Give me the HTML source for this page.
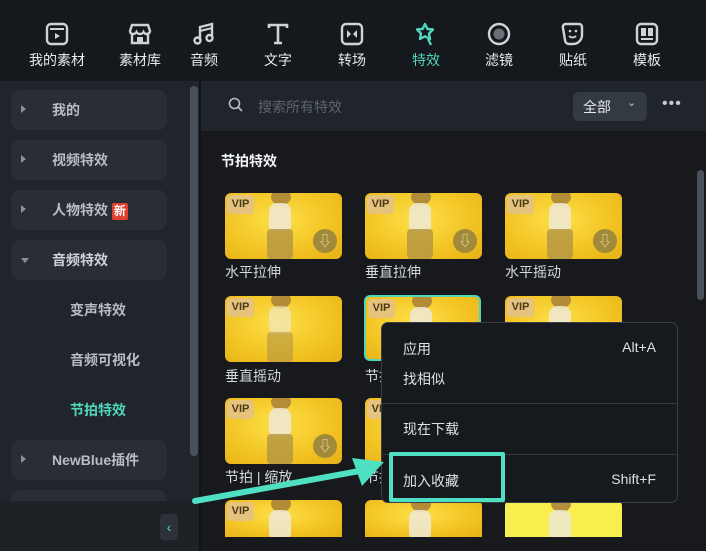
<!DOCTYPE html>
<html><head><meta charset="utf-8"><style>
*{margin:0;padding:0;box-sizing:border-box}
html,body{width:706px;height:551px;overflow:hidden}
body{background:#16191d;font-family:"Liberation Sans","Noto Sans CJK SC",sans-serif;position:relative;color:#d6d9dd}
.top{position:absolute;left:0;top:0;width:706px;height:81px;background:#15181c}
.tb{position:absolute;top:21px;width:74px;text-align:center;font-size:14px;color:#e8eaec}
.tb svg{display:block;margin:0 auto 3px}
.side{position:absolute;left:0;top:81px;width:200px;height:470px;background:#20252b}
.it{position:absolute;left:11px;width:156px;height:40px;background:#292e35;border-radius:9px;font-size:14px;font-weight:bold;color:#b8bdc4}
.it span.t{position:absolute;left:41px;top:10px}
.it .ar{position:absolute;left:10px;top:15px;width:0;height:0;border-left:5px solid #8a9098;border-top:4px solid transparent;border-bottom:4px solid transparent}
.sub{position:absolute;left:70px;font-size:14px;font-weight:bold;color:#b8bdc4}
.main{position:absolute;left:201px;top:81px;width:505px;height:470px;background:#17191c}
.search{position:absolute;left:201px;top:81px;width:505px;height:50px;background:#20252b}
.th{position:absolute;width:117px;height:66px;border-radius:6px;overflow:hidden;background:radial-gradient(ellipse at 45% 40%,#fde14a,#f2c322 60%,#e6b118)}
.th .fig{position:absolute;left:44px;top:10px;width:22px;height:28px;background:#efe9d6;border-radius:8px 8px 4px 4px;opacity:.85}
.th .leg{position:absolute;left:42px;top:36px;width:26px;height:30px;background:#b39445;border-radius:4px;opacity:.8}
.th .hd{position:absolute;left:46px;top:-4px;width:20px;height:16px;background:#a7803a;border-radius:50%;opacity:.85}
.vip{position:absolute;left:2px;top:2px;width:27px;height:19px;background:#e5c37c;border-radius:4px;font-size:11px;font-weight:bold;color:#4a3a18;text-align:center;line-height:19px}
.dl{position:absolute;right:5px;bottom:6px;width:24px;height:24px;border-radius:50%;background:#a18a3a;color:#efe2b0;text-align:center;font-size:14px;line-height:24px}
.lb{position:absolute;font-size:14px;color:#d6d9dd}
.menu{position:absolute;left:381px;top:322px;width:297px;height:181px;background:#16191d;border:1px solid #3a3f46;border-radius:7px}
.mi{position:absolute;left:21px;font-size:14px;color:#dde0e4}
.sc{position:absolute;right:21px;font-size:14px;color:#dde0e4}
.sep{position:absolute;left:0;width:295px;height:1px;background:#33383f}
</style></head><body>
<div class="top">
 <div class="tb" style="left:20px"><svg width="26" height="26" viewBox="0 0 26 26"><rect x="3" y="3" width="20" height="20" rx="4" fill="none" stroke="#cfd2d6" stroke-width="2.4"/><line x1="6" y1="8" x2="20" y2="8" stroke="#cfd2d6" stroke-width="2"/><path d="M11 12l5 3-5 3z" fill="#cfd2d6"/></svg>我的素材</div>
 <div class="tb" style="left:103px"><svg width="26" height="26" viewBox="0 0 26 26"><path d="M5 4h16l2 6c0 2-2 3-3.5 3S17 12 16.5 11c-.5 1-2 2-3.5 2s-3-1-3.5-2C9 12 7.5 13 6 13S3 12 3 10z M5 13v9h16v-9" fill="none" stroke="#cfd2d6" stroke-width="2.4"/><rect x="10" y="16" width="6" height="6" fill="#cfd2d6"/></svg>素材库</div>
 <div class="tb" style="left:167px"><svg width="26" height="26" viewBox="0 0 26 26"><path d="M9 19V6l12-3v13" fill="none" stroke="#cfd2d6" stroke-width="2.4"/><circle cx="6.5" cy="19.5" r="3" fill="none" stroke="#cfd2d6" stroke-width="2.4"/><circle cx="18.5" cy="17" r="3" fill="none" stroke="#cfd2d6" stroke-width="2.4"/><line x1="9" y1="10" x2="21" y2="7" stroke="#cfd2d6" stroke-width="2"/></svg>音频</div>
 <div class="tb" style="left:241px"><svg width="26" height="26" viewBox="0 0 26 26"><path d="M4 7V4h18v3M13 4v18M9 22h8" fill="none" stroke="#cfd2d6" stroke-width="2.6"/></svg>文字</div>
 <div class="tb" style="left:315px"><svg width="26" height="26" viewBox="0 0 26 26"><rect x="3" y="3" width="20" height="20" rx="4" fill="none" stroke="#cfd2d6" stroke-width="2.4"/><path d="M8 9l4 4-4 4zM18 9l-4 4 4 4z" fill="#cfd2d6"/></svg>转场</div>
 <div class="tb" style="left:389px;color:#4fd6bb"><svg width="26" height="26" viewBox="0 0 26 26"><path d="M12 3l2.5 5 5.5 .5-4 4 1 5.5-5-2.7-5 2.7 1-5.5-4-4 5.5-.5z" fill="none" stroke="#4fd6bb" stroke-width="2.4" stroke-linejoin="round"/><line x1="15" y1="18" x2="18" y2="24" stroke="#4fd6bb" stroke-width="2.4"/></svg>特效</div>
 <div class="tb" style="left:462px"><svg width="26" height="26" viewBox="0 0 26 26"><circle cx="13" cy="13" r="10" fill="none" stroke="#cfd2d6" stroke-width="2.4"/><circle cx="13" cy="13" r="5.5" fill="#6b6f75"/></svg>滤镜</div>
 <div class="tb" style="left:536px"><svg width="26" height="26" viewBox="0 0 26 26"><path d="M6 3h13a3 3 0 0 1 3 3v8c0 5-4 9-9 9H9a4 4 0 0 1-4-4L3 7a3 3 0 0 1 3-4z" fill="none" stroke="#cfd2d6" stroke-width="2.4"/><circle cx="10" cy="10" r="1.3" fill="#cfd2d6"/><circle cx="16" cy="10" r="1.3" fill="#cfd2d6"/><path d="M9 15c2 2 5 2 7 0" fill="none" stroke="#cfd2d6" stroke-width="1.8"/></svg>贴纸</div>
 <div class="tb" style="left:610px"><svg width="26" height="26" viewBox="0 0 26 26"><rect x="3" y="3" width="20" height="20" rx="4" fill="none" stroke="#cfd2d6" stroke-width="2.4"/><rect x="7" y="7" width="5" height="8" fill="#cfd2d6"/><rect x="14" y="7" width="5" height="8" fill="#cfd2d6"/><line x1="7" y1="18" x2="19" y2="18" stroke="#cfd2d6" stroke-width="2"/></svg>模板</div>
</div>
<div class="side">
 <div class="it" style="top:9px"><i class="ar"></i><span class="t">我的</span></div>
 <div class="it" style="top:59px"><i class="ar"></i><span class="t">视频特效</span></div>
 <div class="it" style="top:109px"><i class="ar"></i><span class="t">人物特效 <span style="display:inline-block;background:#e0402f;color:#fff;font-size:12px;padding:0 2px;border-radius:2px;line-height:17px">新</span></span></div>
 <div class="it" style="top:159px"><i class="ar" style="border-left:4px solid transparent;border-right:4px solid transparent;border-top:5px solid #8a9098;border-bottom:0;top:18px"></i><span class="t" style="color:#d0d4d9">音频特效</span></div>
 <div class="sub" style="top:219px">变声特效</div>
 <div class="sub" style="top:269px">音频可视化</div>
 <div class="sub" style="top:319px;color:#4fd6bb">节拍特效</div>
 <div class="it" style="top:359px"><i class="ar"></i><span class="t">NewBlue插件</span></div>
 <div class="it" style="top:409px"></div>
 <div style="position:absolute;left:0;top:420px;width:200px;height:50px;background:#1e2227"></div>
 <div style="position:absolute;left:160px;top:433px;width:18px;height:26px;background:#2c3238;border-radius:4px;color:#4fd6bb;text-align:center;line-height:26px;font-size:14px">‹</div>
 <div style="position:absolute;left:190px;top:5px;width:8px;height:370px;background:#48505a;border-radius:4px"></div>
 <div style="position:absolute;left:199px;top:0;width:2px;height:470px;background:#111316"></div>
</div>
<div class="main"></div>
<div class="search">
 <svg style="position:absolute;left:27px;top:16px" width="16" height="16" viewBox="0 0 16 16"><circle cx="6.5" cy="6.5" r="5" fill="none" stroke="#b8bdc4" stroke-width="1.6"/><line x1="10" y1="10" x2="14" y2="14" stroke="#b8bdc4" stroke-width="1.6"/></svg>
 <span style="position:absolute;left:57px;top:16px;font-size:14px;color:#5d636b">搜索所有特效</span>
 <div style="position:absolute;left:372px;top:11px;width:74px;height:29px;background:#343a41;border-radius:6px;font-size:14px;color:#e6e8ea;padding:5px 0 0 10px">全部<span style="position:absolute;left:54px;top:4px;font-size:11px;color:#c0c4c9">⌄</span></div>
 <span style="position:absolute;left:461px;top:14px;font-size:16px;color:#c7cbd0;letter-spacing:1px">•••</span>
</div>
<div style="position:absolute;left:221px;top:151px;font-size:14px;font-weight:bold;color:#f0f2f4">节拍特效</div>
<div style="position:absolute;left:697px;top:170px;width:7px;height:130px;background:#48505a;border-radius:4px"></div>

<div class="th" style="left:225px;top:193px"><div class="hd"></div><div class="fig"></div><div class="leg"></div><div class="vip">VIP</div><div class="dl">⇩</div></div>
<div class="th" style="left:365px;top:193px"><div class="hd"></div><div class="fig"></div><div class="leg"></div><div class="vip">VIP</div><div class="dl">⇩</div></div>
<div class="th" style="left:505px;top:193px"><div class="hd"></div><div class="fig"></div><div class="leg"></div><div class="vip">VIP</div><div class="dl">⇩</div></div>
<div class="lb" style="left:225px;top:262px">水平拉伸</div>
<div class="lb" style="left:365px;top:262px">垂直拉伸</div>
<div class="lb" style="left:505px;top:262px">水平摇动</div>

<div class="th" style="left:225px;top:296px"><div class="hd"></div><div class="fig" style="opacity:.6"></div><div class="leg" style="opacity:.6"></div><div class="vip">VIP</div></div>
<div class="th" style="left:364px;top:295px;border:2px solid #4fd6bb"><div class="hd"></div><div class="fig"></div><div class="vip">VIP</div></div>
<div class="th" style="left:505px;top:296px"><div class="hd"></div><div class="fig"></div><div class="vip">VIP</div></div>
<div class="lb" style="left:225px;top:366px">垂直摇动</div>
<div class="lb" style="left:365px;top:366px">节拍</div>

<div class="th" style="left:225px;top:398px"><div class="hd"></div><div class="fig"></div><div class="leg"></div><div class="vip">VIP</div><div class="dl">⇩</div></div>
<div class="th" style="left:365px;top:398px"><div class="hd"></div><div class="fig"></div><div class="leg"></div><div class="vip">VIP</div></div>
<div class="lb" style="left:225px;top:467px">节拍 | 缩放</div>
<div class="lb" style="left:365px;top:467px">节拍</div>

<div class="th" style="left:225px;top:500px;height:37px;border-radius:6px 6px 0 0"><div class="hd"></div><div class="fig"></div><div class="vip">VIP</div></div>
<div class="th" style="left:365px;top:500px;height:37px;border-radius:6px 6px 0 0"><div class="hd"></div><div class="fig"></div></div>
<div class="th" style="left:505px;top:500px;height:37px;border-radius:6px 6px 0 0;background:#f8ee4e"><div class="hd"></div><div class="fig"></div></div>

<div class="menu">
 <div class="mi" style="top:16px">应用</div><div class="sc" style="top:16px">Alt+A</div>
 <div class="mi" style="top:46px">找相似</div>
 <div class="sep" style="top:80px"></div>
 <div class="mi" style="top:96px">现在下载</div>
 <div class="sep" style="top:131px"></div>
 <div class="mi" style="top:148px">加入收藏</div><div class="sc" style="top:148px">Shift+F</div>
</div>
<div style="position:absolute;left:389px;top:452px;width:116px;height:50px;border:4px solid #4fdfc2;border-radius:2px"></div>
<svg style="position:absolute;left:0;top:0" width="706" height="551"><line x1="195" y1="501" x2="365" y2="470" stroke="#4fdfc2" stroke-width="6" stroke-linecap="round"/><path d="M384 462L352 458 362 486z" fill="#4fdfc2"/></svg>
</body></html>
